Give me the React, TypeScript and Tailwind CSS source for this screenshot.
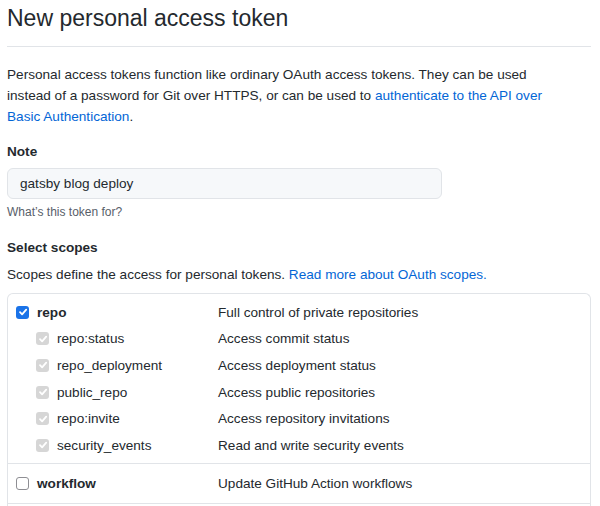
import { ReactNode } from "react";

type Scope = { name: string; desc: string };

const repoScopes: Scope[] = [
  { name: "repo:status", desc: "Access commit status" },
  { name: "repo_deployment", desc: "Access deployment status" },
  { name: "public_repo", desc: "Access public repositories" },
  { name: "repo:invite", desc: "Access repository invitations" },
  { name: "security_events", desc: "Read and write security events" },
];

function Check({ state }: { state: "on" | "off" | "disabled" }) {
  if (state === "off") {
    return <span className="block h-[13px] w-[13px] rounded-[3px] border border-[#8e8e93] bg-white" />;
  }
  const bg = state === "on" ? "bg-[#1a73e8]" : "bg-[#d6d6d6]";
  return (
    <span className={`flex h-[13px] w-[13px] items-center justify-center rounded-[3px] ${bg}`}>
      <svg width="10" height="10" viewBox="0 0 10 10" fill="none">
        <path d="M2 5.2 4.1 7.3 8.2 2.6" stroke="white" strokeWidth="1.8" strokeLinecap="round" strokeLinejoin="round" />
      </svg>
    </span>
  );
}

function Row({ box, label, desc, indent, bold, tall }: { box: ReactNode; label: string; desc: string; indent?: boolean; bold?: boolean; tall?: boolean }) {
  return (
    <div className={`flex items-center ${tall ? "h-[39px]" : "h-[26.6px]"}`}>
      <div className={`flex w-[202px] shrink-0 items-center gap-2 ${indent ? "pl-5" : ""}`}>
        {box}
        <span className={bold ? "font-bold" : ""}>{label}</span>
      </div>
      <span>{desc}</span>
    </div>
  );
}

export default function App() {
  return (
    <div className="min-h-screen bg-white pl-[7px] pr-[9px] text-[13.6px] leading-[21px] text-[#24292e]" style={{ fontFamily: "'Liberation Sans', Arial, sans-serif" }}>
      <h1 className="border-b border-[#e1e4e8] pt-[3px] pb-[13px] text-[23px] leading-[30px] font-normal">New personal access token</h1>

      <p className="mt-[17px] max-w-[550px]">
        Personal access tokens function like ordinary OAuth access tokens. They can be used instead of a password for Git over HTTPS, or can be used to{" "}
        <a className="text-[#0366d6]">authenticate to the API over Basic Authentication</a>.
      </p>

      <div className="mt-[14px] font-bold">Note</div>
      <div className="mt-[6px] flex h-[31px] w-[435px] items-center rounded-md border border-[#e1e4e8] bg-[#f6f8fa] px-3">gatsby blog deploy</div>
      <div className="mt-[4px] text-[12px] leading-[18px] text-[#586069]">What’s this token for?</div>

      <div className="mt-[16px] font-bold">Select scopes</div>
      <p className="mt-[6px]">
        Scopes define the access for personal tokens. <a className="text-[#0366d6]">Read more about OAuth scopes.</a>
      </p>

      <div className="mt-[8px] rounded-t-md border border-b-0 border-[#e1e4e8] pl-2">
        <div className="pt-[5px] pb-[4px]">
          <Row box={<Check state="on" />} label="repo" desc="Full control of private repositories" bold />
          {repoScopes.map((s) => (
            <Row key={s.name} box={<Check state="disabled" />} label={s.name} desc={s.desc} indent />
          ))}
        </div>
        <div className="-ml-2 border-t border-[#e1e4e8] pl-2">
          <Row box={<Check state="off" />} label="workflow" desc="Update GitHub Action workflows" bold tall />
        </div>
        <div className="-ml-2 h-2 border-t border-[#e1e4e8]" />
      </div>
    </div>
  );
}
